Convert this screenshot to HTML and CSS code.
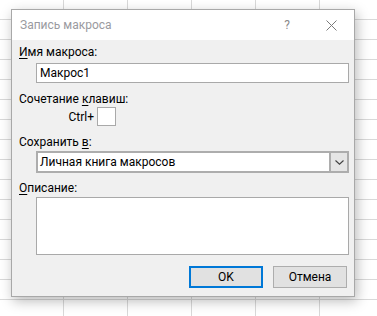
FILE: index.html
```html
<!DOCTYPE html>
<html lang="ru">
<head>
<meta charset="utf-8">
<title>Запись макроса</title>
<link rel="stylesheet" href="styles.css">
</head>
<body>
<div class="dialog">
  <div class="titlebar">
    <span class="title">Запись макроса</span>
    <span class="help">?</span>
    <span class="close"><svg width="11" height="11" viewBox="0 0 11 11"><path d="M0.5 0.5 L10.5 10.5 M10.5 0.5 L0.5 10.5" stroke="#7a7a7a" stroke-width="1" fill="none"/></svg></span>
  </div>
  <div class="content">
    <div class="lbl first"><u>И</u>мя макроса:</div>
    <div class="field name">Макрос1</div>
    <div class="lbl gap8">Сочетание <u>к</u>лавиш:</div>
    <div class="ctrlrow"><span class="ctrl">Ctrl+</span><span class="keybox"></span></div>
    <div class="lbl gap8">Сохранить <u>в</u>:</div>
    <div class="select"><span class="seltext">Личная книга макросов</span><span class="dd"><svg width="9" height="5" viewBox="0 0 9 5"><path d="M0.5 0.5 L4.5 4.2 L8.5 0.5" stroke="#404040" stroke-width="1.1" fill="none"/></svg></span></div>
    <div class="lbl gap7"><u>О</u>писание:</div>
    <div class="textarea"></div>
    <div class="buttons">
      <div class="btn ok">OK</div>
      <div class="btn cancel">Отмена</div>
    </div>
  </div>
</div>
</body>
</html>
```
FILE: styles.css
```css
html, body {
  margin: 0;
  padding: 0;
}
body {
  width: 377px;
  height: 316px;
  box-sizing: border-box;
  padding: 9px 0 0 11px;
  font-family: Roboto, "Noto Sans", "Liberation Sans", sans-serif;
  font-size: 12px;
  color: #000;
  background-color: #fff;
  background-image:
    linear-gradient(to right, transparent 63px, #d9d9d9 63px, #d9d9d9 64px, transparent 64px),
    linear-gradient(to bottom, transparent 19px, #d9d9d9 19px, #d9d9d9 20px, transparent 20px);
  background-size: 64px 100%, 100% 20px;
  overflow: hidden;
}
.dialog {
  width: 344px;
  box-sizing: border-box;
  border: 1px solid #a8a8a8;
  background: #f0f0f0;
  box-shadow: 2px 4px 12px rgba(0, 0, 0, 0.28);
}
.titlebar {
  height: 30px;
  background: #fff;
  display: flex;
  align-items: center;
  padding: 0 17px 0 8px;
}
.title {
  color: #9a9aa0;
  font-size: 12px;
}
.help {
  margin-left: auto;
  margin-right: 36px;
  color: #8a8a8a;
  font-size: 12px;
}
.close {
  display: flex;
  width: 11px;
  height: 11px;
  margin-top: 1px;
}
.content {
  padding: 4px 5px 8px 7px;
}
.lbl {
  height: 16px;
  line-height: 16px;
  white-space: nowrap;
}
.lbl u {
  text-underline-offset: 2px;
}
.gap8 { margin-top: 8px; }
.gap7 { margin-top: 7px; }
.field {
  margin: 3px 0 0 17px;
  height: 20px;
  box-sizing: border-box;
  border: 1px solid #a9a9a9;
  background: #fff;
  line-height: 18px;
  padding-left: 3px;
}
.ctrlrow {
  display: flex;
  align-items: center;
  height: 19px;
}
.ctrl {
  width: 75px;
  text-align: right;
}
.keybox {
  margin-left: 3px;
  width: 19px;
  height: 19px;
  box-sizing: border-box;
  border: 1px solid #a9a9a9;
  background: #fff;
}
.select {
  margin: 1px 0 0 17px;
  height: 22px;
  box-sizing: border-box;
  border: 2px solid #adadad;
  background: #fff;
  display: flex;
}
.seltext {
  flex: 1;
  line-height: 18px;
  padding-left: 2px;
}
.dd {
  width: 16px;
  border-left: 2px solid #adadad;
  background: #e5e5e5;
  display: flex;
  align-items: center;
  justify-content: center;
}
.textarea {
  margin: 1px 0 0 17px;
  height: 58px;
  box-sizing: border-box;
  border: 1px solid #a9a9a9;
  background: #fff;
}
.buttons {
  margin-top: 11px;
  display: flex;
  justify-content: flex-end;
  gap: 10px;
  padding-right: 2px;
}
.btn {
  width: 74px;
  height: 22px;
  box-sizing: border-box;
  background: #e1e1e1;
  display: flex;
  align-items: center;
  justify-content: center;
}
.ok {
  border: 2px solid #0078d7;
}
.cancel {
  border: 1px solid #adadad;
}
```
